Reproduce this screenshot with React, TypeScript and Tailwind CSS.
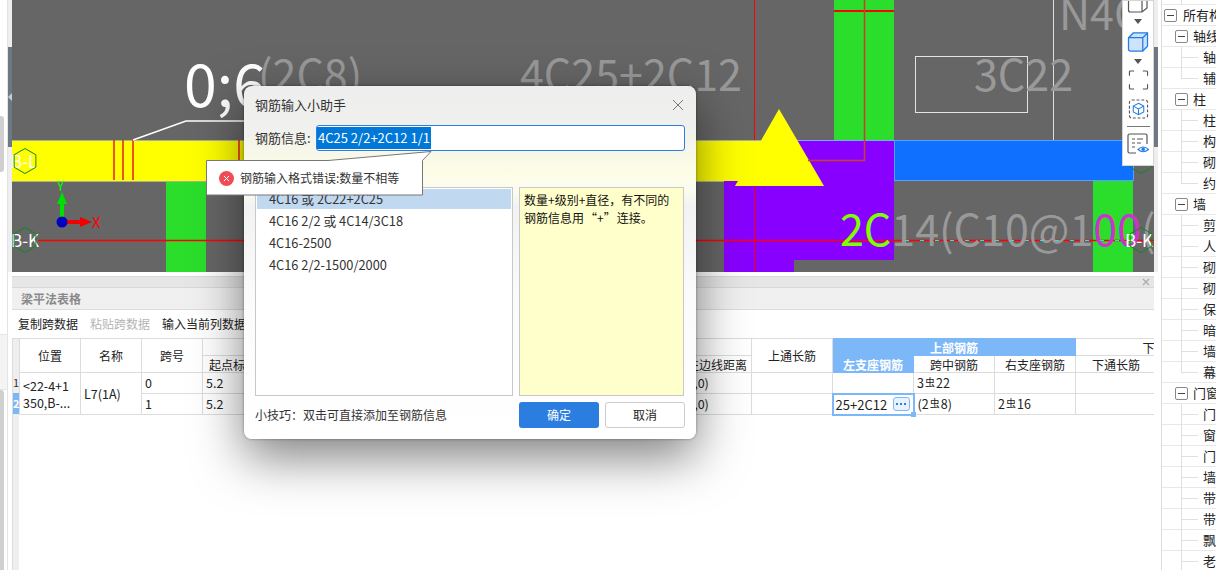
import React from "react";

const GRID = "border border-[#dcdcdc]";

function Hex({ cx, cy }: { cx: number; cy: number }) {
  const r = 12.5;
  const pts = [
    [cx, cy - r],
    [cx + r * 0.87, cy - r / 2],
    [cx + r * 0.87, cy + r / 2],
    [cx, cy + r],
    [cx - r * 0.87, cy + r / 2],
    [cx - r * 0.87, cy - r / 2],
  ]
    .map((p) => p.join(","))
    .join(" ");
  return <polygon points={pts} fill="none" stroke="#0c8a1e" strokeWidth="1" />;
}

function CanvasDrawing() {
  return (
    <svg width="1142" height="272" viewBox="12 0 1142 272" className="block">
      <rect x="12" y="0" width="1142" height="272" fill="#666666" />
      {/* columns */}
      <rect x="834" y="0" width="60" height="140" fill="#2bde2b" />
      <rect x="166" y="181" width="40" height="91" fill="#2bde2b" />
      <rect x="1093" y="181" width="40" height="91" fill="#2bde2b" />
      {/* purple block */}
      <path d="M724 181 V272 H794 V260 H894 V140 H760 V181 Z" fill="#8800ff" />
      {/* beams */}
      <rect x="12" y="140" width="780" height="41" fill="#ffff00" />
      <path d="M12 140.5 H790 M12 181.5 H724" stroke="#a9b0a0" strokeWidth="1" />
      <path d="M797 140.5 H894" stroke="#7aa7ff" strokeWidth="1" />
      <rect x="894.5" y="140.5" width="239" height="40" fill="#0f6fff" stroke="#55a0ff" />
      <polygon points="779,109 824,186 735,186" fill="#ffff00" />
      {/* red lines */}
      <path d="M114 140 V180 M123 140 V180 M133 140 V180 M239 140 V180" stroke="#ee1c1c" strokeWidth="1.5" />
      <path d="M754.5 0 V140 M754.5 186 V272" stroke="#ff0000" strokeWidth="1" />
      <path d="M38 240.5 H1154" stroke="#ff0000" strokeWidth="1.5" />
      <path d="M834 11 H894" stroke="#ff0000" strokeWidth="2" />
      <path d="M864.5 0 V160.5 H808" stroke="#c8402a" strokeWidth="1.5" fill="none" />
      {/* white lines */}
      <rect x="915.5" y="56.5" width="112" height="56" fill="none" stroke="#e4e4e4" />
      <path d="M1053.5 0 V140" stroke="#dddddd" strokeWidth="1" />
      <path d="M133 140 L186 121 H250" stroke="#ffffff" strokeWidth="1.5" fill="none" />
      {/* annotations */}
      <g fontFamily="'Noto Sans CJK SC', sans-serif">
        <text x="184" y="107" fontSize="59" fill="#ffffff">0;6</text>
        <text x="258" y="91" fontSize="43" fill="#999999">(2C8)</text>
        <text x="520" y="91" fontSize="43" fill="#999999">4C25+2C12</text>
        <text x="974" y="91" fontSize="43" fill="#999999">3C22</text>
        <text x="1059" y="30" fontSize="43" fill="#999999">N4C</text>
        <text x="840" y="246" fontSize="43" fill="#999999">
          <tspan fill="#7fff00">2C</tspan>
          <tspan>14(C10@1</tspan>
          <tspan fill="#cc33cc">00</tspan>
          <tspan>(</tspan>
        </text>
        <text x="11" y="168" fontSize="17" fill="#ffffff">B-L</text>
        <text x="11" y="247" fontSize="17" fill="#ffffff">B-K</text>
        <text x="1125" y="247" fontSize="17" fill="#ffffff">B-K</text>
        <text x="92" y="228" fontSize="15" fill="#ff0000">X</text>
        <text x="57" y="191" fontSize="13" fill="#00ff00">Y</text>
      </g>
      <path d="M905 240.5 H1120" stroke="#22e6e6" strokeWidth="1" strokeDasharray="4 11" />
      <Hex cx={25} cy={161} />
      <Hex cx={25} cy={240} />
      <Hex cx={1141} cy={161} />
      <Hex cx={1141} cy={240} />
      {/* axis marker */}
      <path d="M62 222 V204" stroke="#00e000" strokeWidth="4" />
      <polygon points="62,192 67,204 57,204" fill="#00e000" />
      <path d="M62 222 H80" stroke="#f00000" strokeWidth="4" />
      <polygon points="92,222 80,217 80,227" fill="#f00000" />
      <circle cx="62" cy="222" r="5.5" fill="#0000c0" />
    </svg>
  );
}

function Caret({ className }: { className: string }) {
  return (
    <svg width="8" height="5" viewBox="0 0 8 5" className={`shrink-0 ${className}`}>
      <polygon points="0,0 8,0 4,5" fill="#555" />
    </svg>
  );
}

function ToolStrip() {
  return (
    <div className="absolute left-[1110px] top-0 w-[32px] h-[166px] bg-white border border-[#d4d4d4] flex flex-col items-center overflow-hidden">
      <svg width="22" height="12" viewBox="0 8 22 12" className="shrink-0">
        <path d="M1.5 2 V17 a2 2 0 0 0 2 2 H15 l5-4 V2 M15 4 V19" fill="none" stroke="#555" strokeWidth="1.2" />
      </svg>
      <Caret className="mt-[6px]" />
      <svg width="22" height="20" viewBox="0 0 22 21" className="shrink-0 mt-[8px]">
        <path d="M1 6 L6 1 H21 V15 L16 20 H3 a2 2 0 0 1-2-2 Z" fill="#cfe2fb" stroke="#1e7ce8" strokeWidth="1.3" />
        <path d="M1 6 H16 V20 M16 6 L21 1" fill="none" stroke="#1e7ce8" strokeWidth="1.3" />
      </svg>
      <Caret className="mt-[7px]" />
      <svg width="21" height="20" viewBox="0 0 21 21" className="shrink-0 mt-[6px]">
        <path d="M1 6 V2 a1 1 0 0 1 1-1 H6 M15 1 H19 a1 1 0 0 1 1 1 V6 M20 15 V19 a1 1 0 0 1-1 1 H15 M6 20 H2 a1 1 0 0 1-1-1 V15" fill="none" stroke="#555" strokeWidth="1.2" />
      </svg>
      <svg width="21" height="20" viewBox="0 0 21 21" className="shrink-0 mt-[9px]">
        <rect x="1" y="1" width="19" height="19" rx="2.5" fill="none" stroke="#555" strokeWidth="1.2" strokeDasharray="3 2" />
        <path d="M10.5 4.5 L16 7.5 V13.5 L10.5 16.5 L5 13.5 V7.5 Z M5 7.5 L10.5 10.5 L16 7.5 M10.5 10.5 V16.5" fill="none" stroke="#1e7ce8" strokeWidth="1.1" />
      </svg>
      <div className="w-[23px] h-px bg-[#777] mt-[7px] shrink-0" />
      <svg width="22" height="21" viewBox="0 0 22 21" className="shrink-0 mt-[6px]">
        <path d="M9 20 H2.5 a1.5 1.5 0 0 1-1.5-1.5 V2.5 A1.5 1.5 0 0 1 2.5 1 H18.5 A1.5 1.5 0 0 1 20 2.5 V11" fill="none" stroke="#555" strokeWidth="1.2" />
        <path d="M5 6 H8 M10 6 H16 M5 10 H8 M10 10 H14 M5 14 H8" stroke="#555" strokeWidth="1" />
        <path d="M11 16.5 Q16 11.5 21.5 16.5 Q16 21 11 16.5 Z" fill="#fff" stroke="#1e7ce8" strokeWidth="1.1" />
        <circle cx="16.2" cy="16.3" r="1.8" fill="#1e7ce8" />
      </svg>
    </div>
  );
}

function Rebar({ before, after }: { before: string; after: string }) {
  return (
    <span className="whitespace-nowrap text-[12.5px]">
      {before}
      <span className="text-[10px] relative -top-[2px] mx-px">虫</span>
      {after}
    </span>
  );
}

function RebarTable() {
  const th = `${GRID} font-normal text-[12px] leading-[15px] text-[#222] text-center p-0 whitespace-nowrap overflow-hidden`;
  const td = `${GRID} text-[12.5px] leading-[18px] text-[#222] text-left px-[3px] py-0 whitespace-nowrap overflow-hidden`;
  const on = "border border-[#7cb8f8] bg-[#7cb8f8] text-white text-[12px] leading-[15px] text-center font-bold p-0 whitespace-nowrap";
  return (
    <table className="table-fixed border-collapse w-[1238px] shrink-0 self-start">
      <colgroup>
        <col className="w-[61px]" />
        <col className="w-[61px]" />
        <col className="w-[61px]" />
        <col className="w-[61px]" />
        <col className="w-[407px]" />
        <col className="w-[81px]" />
        <col className="w-[81px]" />
        <col className="w-[81px]" />
        <col className="w-[81px]" />
        <col className="w-[81px]" />
        <col className="w-[81px]" />
        <col className="w-[101px]" />
      </colgroup>
      <thead>
        <tr className="h-[17px]">
          <th rowSpan={2} className={th}>位置</th>
          <th rowSpan={2} className={th}>名称</th>
          <th rowSpan={2} className={th}>跨号</th>
          <th colSpan={3} className={th}>标高</th>
          <th rowSpan={2} className={th}>上通长筋</th>
          <th colSpan={3} className={on}>上部钢筋</th>
          <th colSpan={2} className={th}>下部钢筋</th>
        </tr>
        <tr className="h-[17px]">
          <th className={th}>起点标高</th>
          <th className={th}>终点标高</th>
          <th className={th}>距左边线距离</th>
          <th className={on}>左支座钢筋</th>
          <th className={th}>跨中钢筋</th>
          <th className={th}>右支座钢筋</th>
          <th className={th}>下通长筋</th>
          <th className={th}></th>
        </tr>
      </thead>
      <tbody>
        <tr className="h-[21px]">
          <td rowSpan={2} className={`${td} !whitespace-normal !leading-[17px] break-all`}>
            {"<22-4+1"}
            <br />
            {"350,B-..."}
          </td>
          <td rowSpan={2} className={td}>L7(1A)</td>
          <td className={td}>0</td>
          <td className={td}>5.2</td>
          <td className={td}></td>
          <td className={`${td} !pl-[12px]`}>(0,0)</td>
          <td className={td}></td>
          <td className={td}></td>
          <td className={td}><Rebar before="3" after="22" /></td>
          <td className={td}></td>
          <td className={td}></td>
          <td className={td}></td>
        </tr>
        <tr className="h-[21px]">
          <td className={td}>1</td>
          <td className={td}>5.2</td>
          <td className={td}></td>
          <td className={`${td} !pl-[12px]`}>(0,0)</td>
          <td className={td}></td>
          <td className="relative border-2 border-[#7cb8f8] text-[13px] leading-[17px] text-[#222] p-0">
            <div className="flex items-center justify-between pl-[2px] pr-[3px]">
              <span>25+2C12</span>
              <span className="w-[17px] h-[14px] rounded-[3px] border border-[#7cb8f8] bg-[#e8f2ff] flex items-center justify-center gap-[2px]">
                <span className="w-[2px] h-[2px] bg-[#2b7de0]" />
                <span className="w-[2px] h-[2px] bg-[#2b7de0]" />
                <span className="w-[2px] h-[2px] bg-[#2b7de0]" />
              </span>
            </div>
            <span className="absolute -right-[3px] -bottom-[3px] w-[5px] h-[5px] bg-[#7cb8f8]" />
          </td>
          <td className={td}><Rebar before="(2" after="8)" /></td>
          <td className={td}><Rebar before="2" after="16" /></td>
          <td className={td}></td>
          <td className={td}></td>
        </tr>
      </tbody>
    </table>
  );
}

function BottomPanel() {
  return (
    <div className="flex-1 flex flex-col min-h-0 pt-[4px] bg-white overflow-hidden">
      <div className="h-[12px] shrink-0 bg-[#e6e6e6] border-y border-[#d8d8d8] flex items-center justify-end pr-[4px]">
        <svg width="8" height="8" viewBox="0 0 8 8">
          <path d="M1 1 L7 7 M7 1 L1 7" stroke="#aaa" strokeWidth="1.2" />
        </svg>
      </div>
      <div className="h-[22px] shrink-0 bg-[#f0f0f0] border-b border-[#dcdcdc] flex items-center pl-[9px] text-[12px] font-bold text-[#8a8a8a]">
        梁平法表格
      </div>
      <div className="h-[28px] shrink-0 bg-white flex items-center pl-[6px] gap-[12px] text-[12px] text-[#222]">
        <span>复制跨数据</span>
        <span className="text-[#b5b5b5]">粘贴跨数据</span>
        <span>输入当前列数据</span>
      </div>
      <div className="flex flex-1 min-h-0 overflow-hidden">
        <div className="w-[7px] shrink-0 bg-[#eeeeee] border-t border-l border-[#dcdcdc] flex flex-col text-center text-[11px] leading-[21px]">
          <div className="h-[33px] shrink-0" />
          <div className="h-[21px] shrink-0 text-[#333]">1</div>
          <div className="h-[21px] shrink-0 bg-[#7cb8f8] text-white font-bold">2</div>
        </div>
        <RebarTable />
      </div>
    </div>
  );
}

type Node = { label: string; level: 0 | 1 | 2; last?: boolean };

const TREE: Node[] = [
  { label: "", level: 2 },
  { label: "所有构件", level: 0 },
  { label: "轴线", level: 1 },
  { label: "轴网", level: 2 },
  { label: "辅助轴线", level: 2, last: true },
  { label: "柱", level: 1 },
  { label: "柱", level: 2 },
  { label: "构造柱", level: 2 },
  { label: "砌体柱", level: 2 },
  { label: "约束边缘", level: 2, last: true },
  { label: "墙", level: 1 },
  { label: "剪力墙", level: 2 },
  { label: "人防门框", level: 2 },
  { label: "砌体墙", level: 2 },
  { label: "砌体加筋", level: 2 },
  { label: "保温墙", level: 2 },
  { label: "暗梁", level: 2 },
  { label: "墙垛", level: 2 },
  { label: "幕墙", level: 2, last: true },
  { label: "门窗洞", level: 1 },
  { label: "门", level: 2 },
  { label: "窗", level: 2 },
  { label: "门联窗", level: 2 },
  { label: "墙洞", level: 2 },
  { label: "带形窗", level: 2 },
  { label: "带形洞", level: 2 },
  { label: "飘窗", level: 2 },
  { label: "老虎窗", level: 2 },
];

function MinusBox() {
  return (
    <span className="w-[13px] h-[13px] shrink-0 rounded-[2px] border border-[#888] flex items-center justify-center">
      <span className="w-[7px] h-px bg-[#444]" />
    </span>
  );
}

function TreeRow({ node }: { node: Node }) {
  const base = "h-[21px] shrink-0 flex items-center border-b border-[#e8e8e8] whitespace-nowrap text-[13px] text-[#222]";
  if (node.level === 0) {
    return (
      <div className={`${base} pl-[2px] gap-[6px]`}>
        <MinusBox />
        {node.label}
      </div>
    );
  }
  if (node.level === 1) {
    return (
      <div className={`${base} pl-[13px] gap-[5px]`}>
        <MinusBox />
        {node.label}
      </div>
    );
  }
  return (
    <div className={`${base} pl-[19px]`}>
      <span className={`self-start w-[17px] shrink-0 border-l border-[#e0e0e0] ${node.last ? "h-[11px]" : "h-[21px]"}`}>
        <span className="block h-[11px] border-b border-[#e0e0e0]" />
      </span>
      <span className="ml-[5px]">{node.label}</span>
    </div>
  );
}

function TreePanel() {
  return (
    <div className="w-[55px] shrink-0 ml-[7px] border-l border-[#dcdcdc] overflow-hidden flex flex-col">
      <div className="-mt-[16px] flex flex-col">
        {TREE.map((node, i) => (
          <TreeRow key={i} node={node} />
        ))}
      </div>
    </div>
  );
}

function ErrorBalloon() {
  return (
    <div className="absolute left-[206px] top-[150px] w-[230px] h-[46px]">
      <svg width="230" height="46" viewBox="0 0 230 46" className="absolute inset-0">
        <path d="M0.5 10.5 H122 L225 1.5 L216.5 10.5 V45 H0.5 Z" fill="#ffffff" stroke="#777777" />
      </svg>
      <div className="relative h-full pt-[10px] pl-[13px] flex items-center gap-[6px] text-[12px] text-[#333]">
        <svg width="15" height="15" viewBox="0 0 15 15" className="shrink-0">
          <circle cx="7.5" cy="7.5" r="7.5" fill="#f04c55" />
          <path d="M5 5 L10 10 M10 5 L5 10" stroke="#fff" strokeWidth="1" />
        </svg>
        钢筋输入格式错误:数量不相等
      </div>
    </div>
  );
}

function RebarDialog() {
  const examples = ["4C16 2/2 或 4C14/3C18", "4C16-2500", "4C16 2/2-1500/2000"];
  return (
    <div className="absolute left-[244px] top-[86px] w-[452px] h-[353px] rounded-[8px] flex flex-col px-[11px] bg-[linear-gradient(180deg,#eeeeee_0%,#f0f0ee_12%,#fdfde6_24%,#fbfbf0_30%,#f2f2f2_34%,#fbfbfb_60%,#ffffff_100%)] shadow-[0_18px_50px_rgba(0,0,0,0.5),0_0_3px_rgba(0,0,0,0.4)]">
      <div className="h-[39px] pb-[2px] shrink-0 flex items-center justify-between text-[13px] text-[#333]">
        <span>钢筋输入小助手</span>
        <svg width="12" height="12" viewBox="0 0 12 12" className="mr-[1px]">
          <path d="M1 1 L11 11 M11 1 L1 11" stroke="#777" strokeWidth="1" />
        </svg>
      </div>
      <div className="h-[26px] shrink-0 flex items-center gap-[11px] text-[13px] text-[#333]">
        <span className="w-[50px] shrink-0 whitespace-nowrap">钢筋信息:</span>
        <div className="flex-1 h-full rounded-[3px] border border-[#2b7de0] bg-white flex items-center">
          <span className="bg-[#0078d7] text-white text-[13px] leading-[22px] h-[22px] px-[1px] whitespace-nowrap">4C25 2/2+2C12 1/1</span>
        </div>
      </div>
      <div className="flex gap-[6px] mt-[36px] h-[209px] shrink-0">
        <div className="w-[258px] border border-[#c8c8c8] bg-white p-px text-[12.8px] text-[#333] flex flex-col">
          <div className="h-[20px] shrink-0 mb-px pl-[12px] flex items-center whitespace-nowrap bg-[#c0d8f0]">4C16 或 2C22+2C25</div>
          {examples.map((text) => (
            <div key={text} className="h-[22px] shrink-0 pl-[12px] flex items-center whitespace-nowrap">
              {text}
            </div>
          ))}
        </div>
        <div className="w-[165px] border border-[#c8c8c8] bg-[#ffffcc] px-[4px] py-[3px] text-[12px] leading-[18px] text-[#111]">
          数量+级别+直径，有不同的钢筋信息用<span className="mx-px">“+”</span>连接。
        </div>
      </div>
      <div className="flex items-center mt-[6px] h-[26px] shrink-0">
        <span className="text-[12px] text-[#333] w-[264px] whitespace-nowrap">小技巧：双击可直接添加至钢筋信息</span>
        <button className="w-[80px] h-[26px] rounded-[3px] bg-[#2b7de0] text-white text-[12px]">确定</button>
        <button className="w-[80px] h-[26px] ml-[6px] rounded-[3px] border border-[#cccccc] bg-white text-[#222] text-[12px]">取消</button>
      </div>
    </div>
  );
}

export default function App() {
  return (
    <div className="relative w-[1216px] h-[570px] overflow-hidden flex bg-white [font-family:'Noto_Sans_CJK_SC',sans-serif]">
      {/* left rail */}
      <div className="w-[12px] shrink-0 flex">
        <div className="w-[8px] shrink-0 border-r border-[#e4e4e4] flex flex-col">
          <div className="h-[116px] shrink-0" />
          <div className="h-[56px] w-[4px] shrink-0 rounded-r-[3px] bg-[#cfcfcf]" />
          <div className="h-[163px] shrink-0 border-b border-[#e4e4e4]" />
          <div className="h-[55px] shrink-0 bg-[#f4f4f4] border-b border-[#e4e4e4]" />
          <div className="flex-1 w-[4px] rounded-tr-[3px] bg-[#cfcfcf]" />
        </div>
        <div className="w-[4px] shrink-0 flex flex-col">
          <div className="h-[47px] shrink-0 bg-[#eeeeee]" />
          <div className="h-[100px] shrink-0 bg-[#6e7784] flex items-center">
            <span className="w-0 h-0 border-y-[4px] border-y-transparent border-r-[4px] border-r-[#c8ccd2]" />
          </div>
          <div className="h-[125px] shrink-0 bg-[#eeeeee]" />
        </div>
      </div>

      {/* canvas and table */}
      <div className="w-[1142px] shrink-0 flex flex-col">
        <div className="relative h-[272px] shrink-0">
          <CanvasDrawing />
          <ToolStrip />
        </div>
        <BottomPanel />
      </div>

      {/* splitter */}
      <div className="absolute left-[1154px] top-0 w-[4px] h-[272px] bg-[#eeeeee] flex flex-col">
        <div className="h-[47px] shrink-0" />
        <div className="h-[100px] shrink-0 bg-[#6e7784]" />
      </div>
      <TreePanel />

      <RebarDialog />
      <ErrorBalloon />
    </div>
  );
}
